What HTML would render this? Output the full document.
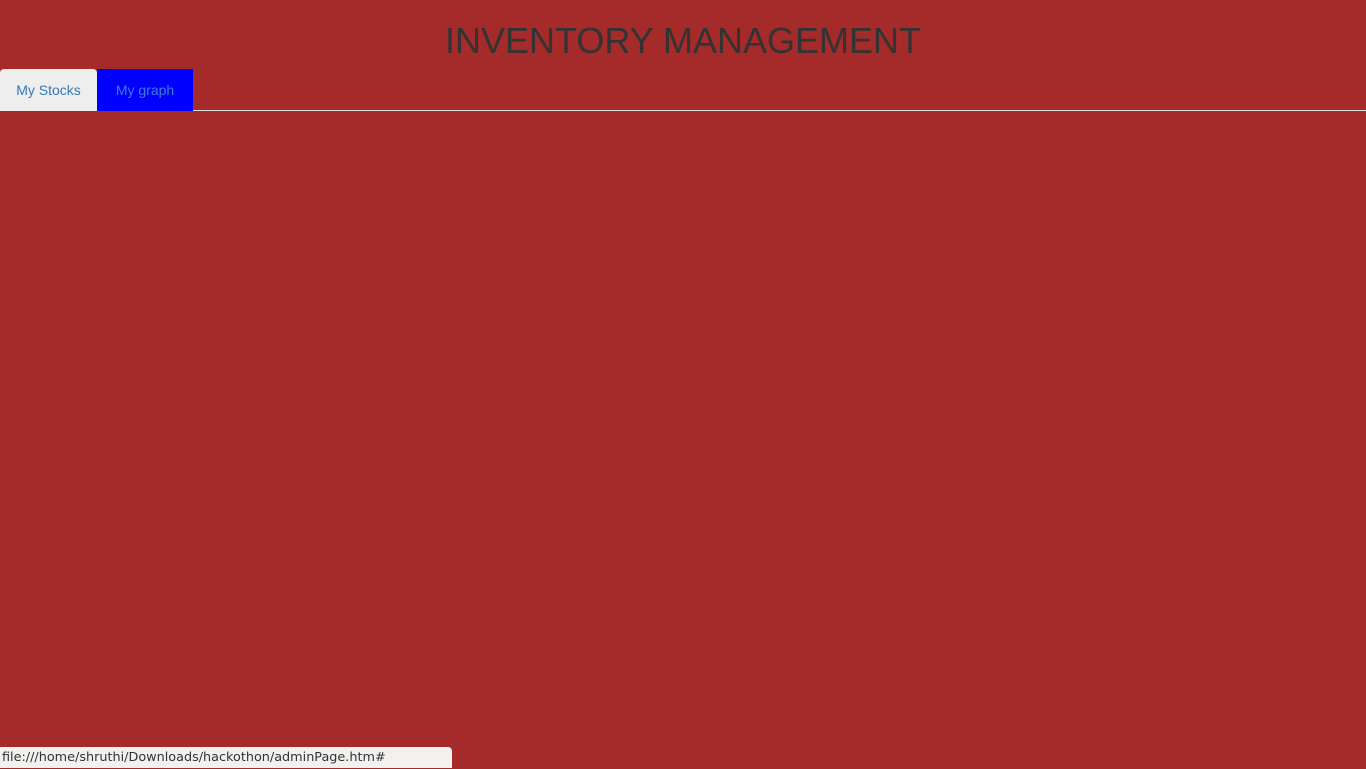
<!DOCTYPE html>
<html><head><style>
html,body{margin:0;padding:0;width:1366px;height:768px;background:#a52a2a;overflow:hidden;font-family:"Liberation Sans",sans-serif;}
h1{margin:0;position:absolute;top:20px;left:0;width:1366px;text-align:center;font-weight:normal;font-size:36px;color:#333;}
.line{position:absolute;top:110px;left:0;width:1366px;height:1px;background:#ddd;}
.t1{position:absolute;top:69px;left:0;width:97px;height:42px;background:#eee;border-radius:4px 4px 0 0;color:#337ab7;font-size:14px;line-height:42px;text-align:center;}
.t2{position:absolute;top:69px;left:97px;width:96px;height:42px;background:#0000ff;color:#3a7fd0;font-size:14px;line-height:42px;text-align:center;}
.st{position:absolute;left:0;top:747px;width:452px;height:21px;background:#f2f1f0;border-top-right-radius:4px;font-family:"DejaVu Sans",sans-serif;font-size:12.8px;color:#333;line-height:22px;padding-left:2px;box-sizing:border-box;}
</style></head><body>
<h1>INVENTORY MANAGEMENT</h1>
<div class="line"></div>
<div class="t1">My Stocks</div>
<div class="t2">My graph</div>
<div class="st">file:///home/shruthi/Downloads/hackothon/adminPage.htm#</div>
</body></html>
